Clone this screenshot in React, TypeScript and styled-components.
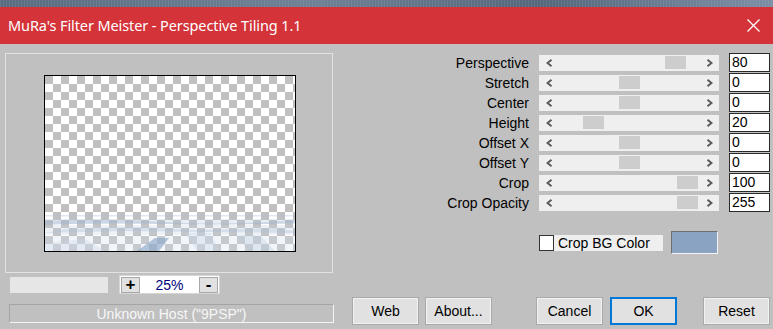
import { Fragment } from 'react';
import styled, { createGlobalStyle } from 'styled-components'

const GlobalStyle = createGlobalStyle`
  html, body {
    margin: 0;
    padding: 0;
    background: #c0c0c0;
  }
  * { box-sizing: border-box; }
`;

const Window = styled.div`
  width: 773px;
  height: 329px;
  overflow: hidden;
  display: flex;
  flex-direction: column;
  background: #c0c0c0;
  font-family: "Liberation Sans", Arial, sans-serif;
  font-size: 14px;
  color: #000;
`;

const Desktop = styled.div`
  height: 7px;
  flex: none;
  background:
    repeating-linear-gradient(90deg, rgba(255,255,255,0.08) 0 1px, transparent 1px 3px),
    linear-gradient(90deg, #5b6b80 0%, #6f7f94 40%, #56677c 70%, #7d8ea4 100%);
`;

const TitleBar = styled.div`
  height: 37px;
  flex: none;
  background: #d33339;
  display: flex;
  align-items: center;
  justify-content: space-between;
  padding: 0 12px 0 8px;
  color: #fff;
`;

const Title = styled.span`
  font-family: "Noto Sans", "Open Sans", sans-serif;
  font-size: 14.5px;
  letter-spacing: -0.1px;
  padding-bottom: 1px;
`;

const Close = styled.svg`
  width: 13px;
  height: 13px;
  margin-right: 1px;
`;

const Body = styled.div`
  flex: 1;
  display: flex;
`;

const LeftCol = styled.div`
  width: 340px;
  padding: 9px 0 0 5px;
  display: flex;
  flex-direction: column;
`;

const PreviewFrame = styled.div`
  width: 328px;
  height: 220px;
  border: 1px solid #e2e2e2;
  display: flex;
  align-items: center;
  justify-content: center;
  padding-left: 2px;
`;

const Preview = styled.div`
  position: relative;
  width: 252px;
  height: 177px;
  border: 1px solid #000;
  background-color: #fff;
  background-image:
    linear-gradient(45deg, #c0c0c0 25%, transparent 25%, transparent 75%, #c0c0c0 75%),
    linear-gradient(45deg, #c0c0c0 25%, transparent 25%, transparent 75%, #c0c0c0 75%);
  background-size: 16px 16px;
  background-position: 8px 0, 0 8px;
  overflow: hidden;
`;

const Floor = styled.svg`
  position: absolute;
  left: 0;
  bottom: 0;
  width: 250px;
  height: 36px;
`;

const ZoomRow = styled.div`
  display: flex;
  align-items: center;
  margin-top: 2px;
  padding-left: 5px;
  gap: 11px;
`;

const ZoomBar = styled.div`
  width: 98px;
  height: 16px;
  background: #e6e6e6;
`;

const ZoomBox = styled.div`
  width: 101px;
  height: 19px;
  background: #fff;
  border: 1px solid #d6d6d6;
  display: flex;
  align-items: center;
  justify-content: space-between;
  padding: 0 1px;
`;

const ZoomBtn = styled.div`
  width: 19px;
  height: 16px;
  background: #e1e1e1;
  border: 1px solid #a8a8a8;
  display: flex;
  align-items: center;
  justify-content: center;
  font-weight: bold;
  font-size: 17px;
  line-height: 1;
`;

const ZoomValue = styled.span`
  color: #000080;
  font-size: 14px;
`;

const Status = styled.div`
  margin: 10px 0 0 4px;
  width: 325px;
  height: 19px;
  border-top: 1px solid #a4a4a4;
  border-left: 1px solid #a4a4a4;
  border-bottom: 1px solid #f4f4f4;
  border-right: 1px solid #f4f4f4;
  color: #f7f7f7;
  display: flex;
  align-items: center;
  justify-content: center;
  font-size: 14px;
`;

const RightCol = styled.div`
  flex: 1;
  padding-top: 9px;
  display: flex;
  flex-direction: column;
`;

const Sliders = styled.div`
  display: grid;
  grid-template-columns: 189px 180px 41px;
  column-gap: 10px;
  grid-auto-rows: 20px;
`;

const Label = styled.div`
  text-align: right;
  line-height: 20px;
  white-space: nowrap;
`;

const Track = styled.div`
  position: relative;
  margin-top: 2px;
  height: 16px;
  background: #efefef;
  display: flex;
  align-items: center;
  justify-content: space-between;
  padding: 0 6px 0 7px;
`;

const Thumb = styled.div`
  position: absolute;
  top: 1px;
  width: 21px;
  height: 13px;
  background: #cdcdcd;
`;

const Arrow = styled.svg`
  width: 7px;
  height: 8px;
  position: relative;
`;

const ValueBox = styled.div`
  height: 19px;
  background: #fff;
  border: 1px solid #2a2a2a;
  padding-left: 2px;
  line-height: 17px;
`;

const OptionRow = styled.div`
  display: flex;
  align-items: center;
  margin-top: 18px;
  padding-left: 199px;
  height: 23px;
`;

const CheckBox = styled.div`
  width: 15px;
  height: 16px;
  background: #fff;
  border: 1px solid #333;
`;

const CheckLabel = styled.div`
  width: 109px;
  height: 16px;
  background: #efefef;
  line-height: 16px;
  padding-left: 4px;
`;

const Swatch = styled.div<{ $color: string }>`
  margin-left: 8px;
  width: 47px;
  height: 23px;
  background: ${p => p.$color};
  border-top: 1px solid #6e6e6e;
  border-left: 1px solid #6e6e6e;
  border-bottom: 1px solid #f4f4f4;
  border-right: 1px solid #f4f4f4;
`;

const ButtonRow = styled.div`
  display: flex;
  margin-top: 43px;
  padding-left: 12px;
`;

const Button = styled.div<{ $gap?: number; $primary?: boolean }>`
  margin-left: ${p => p.$gap ?? 0}px;
  width: 67px;
  height: 28px;
  background: #e1e1e1;
  border: ${p => (p.$primary ? '2px solid #0078d7' : '1px solid #a9a9a9')};
  box-shadow: ${p => (p.$primary ? 'none' : 'inset 0 0 0 1px #f2f2f2')};
  display: flex;
  align-items: center;
  justify-content: center;
  font-size: 14px;
`;

const sliders = [
  { label: 'Perspective', value: '80', pos: 126 },
  { label: 'Stretch', value: '0', pos: 80 },
  { label: 'Center', value: '0', pos: 80 },
  { label: 'Height', value: '20', pos: 44 },
  { label: 'Offset X', value: '0', pos: 80 },
  { label: 'Offset Y', value: '0', pos: 80 },
  { label: 'Crop', value: '100', pos: 138 },
  { label: 'Crop Opacity', value: '255', pos: 138 },
];

const ChevronLeft = () => (
  <Arrow viewBox="0 0 7 8">
    <path d="M5.5 0.8 L1.5 4 L5.5 7.2" fill="none" stroke="#5a5a5a" strokeWidth="2" />
  </Arrow>
);

const ChevronRight = () => (
  <Arrow viewBox="0 0 7 8">
    <path d="M1.5 0.8 L5.5 4 L1.5 7.2" fill="none" stroke="#5a5a5a" strokeWidth="2" />
  </Arrow>
);

const App = () => {
  return (
    <Window>
      <GlobalStyle />
      <Desktop />
      <TitleBar>
        <Title>MuRa's Filter Meister - Perspective Tiling 1.1</Title>
        <Close viewBox="0 0 13 13">
          <path d="M0.5 0.5 L12.5 12.5 M12.5 0.5 L0.5 12.5" stroke="#fff" strokeWidth="1.3" />
        </Close>
      </TitleBar>
      <Body>
        <LeftCol>
          <PreviewFrame>
            <Preview>
              <Floor viewBox="0 0 250 36" preserveAspectRatio="none">
                <rect x="0" y="0" width="250" height="1.5" fill="#a8bcd4" opacity="0.35" />
                <rect x="0" y="4" width="250" height="5" fill="#b4c6dc" opacity="0.3" />
                <rect x="0" y="10" width="250" height="10" fill="#c6d4e6" opacity="0.3" />
                <rect x="0" y="21" width="250" height="15" fill="#d4dfec" opacity="0.3" />
                <path d="M0 6 Q60 3 120 7 T250 5 L250 8 Q180 11 120 9 T0 10 Z" fill="#9fb5d0" opacity="0.4" />
                <path d="M20 14 L90 12 L150 15 L230 13 L250 16 L250 18 L160 17 L80 16 L0 18 Z" fill="#a9bdd6" opacity="0.35" />
                <path d="M92 36 L110 23 L124 23 L114 36 Z" fill="#8ea8c8" opacity="0.65" />
                <path d="M140 18 L165 18 L175 36 L152 36 Z" fill="#c9d6e7" opacity="0.4" />
                <path d="M190 20 L215 20 L230 36 L205 36 Z" fill="#b9cae0" opacity="0.35" />
                <path d="M0 28 L40 24 L60 36 L0 36 Z" fill="#cbd8e8" opacity="0.35" />
              </Floor>
            </Preview>
          </PreviewFrame>
          <ZoomRow>
            <ZoomBar />
            <ZoomBox>
              <ZoomBtn>+</ZoomBtn>
              <ZoomValue>25%</ZoomValue>
              <ZoomBtn>-</ZoomBtn>
            </ZoomBox>
          </ZoomRow>
          <Status>Unknown Host ("9PSP")</Status>
        </LeftCol>
        <RightCol>
          <Sliders>
            {sliders.map(s => (
              <Fragment key={s.label}>
                <Label>{s.label}</Label>
                <Track>
                  <Thumb style={{ left: s.pos }} />
                  <ChevronLeft />
                  <ChevronRight />
                </Track>
                <ValueBox>{s.value}</ValueBox>
              </Fragment>
            ))}
          </Sliders>
          <OptionRow>
            <CheckBox />
            <CheckLabel>Crop BG Color</CheckLabel>
            <Swatch $color="#8aa3c2" />
          </OptionRow>
          <ButtonRow>
            <Button>Web</Button>
            <Button $gap={6}>About...</Button>
            <Button $gap={44}>Cancel</Button>
            <Button $gap={7} $primary>OK</Button>
            <Button $gap={26}>Reset</Button>
          </ButtonRow>
        </RightCol>
      </Body>
    </Window>
  )
}

export default App;
